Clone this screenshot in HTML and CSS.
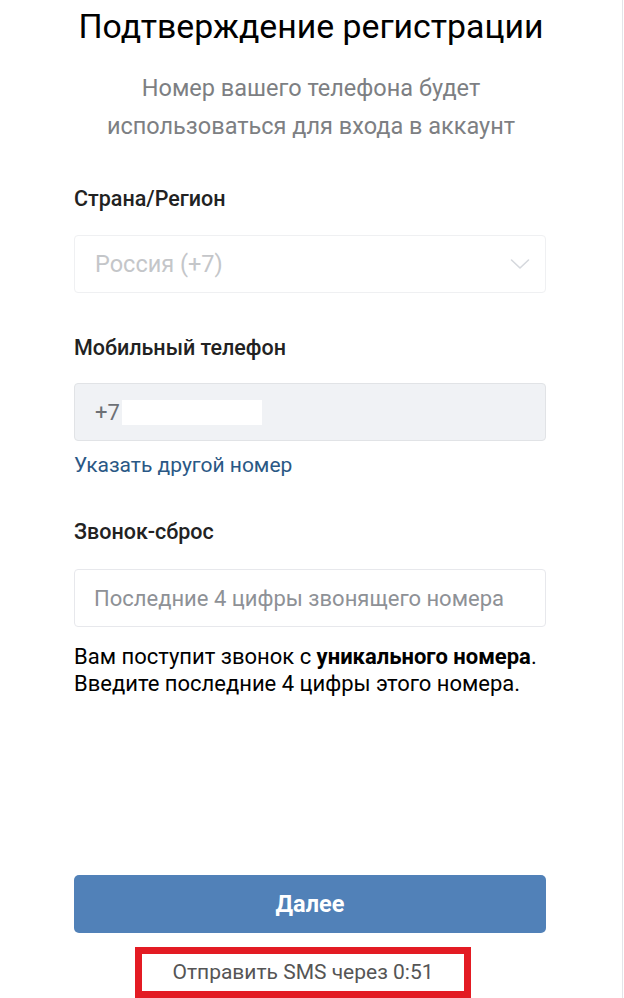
FILE: index.html
```html
<!DOCTYPE html>
<html lang="ru">
<head>
    <meta charset="UTF-8">
    <meta name="viewport" content="width=device-width, initial-scale=1.0">
    <title>Подтверждение регистрации</title>
    <link rel="stylesheet" href="styles.css">
</head>
<body>

<div class="page">
    <h1 class="title">Подтверждение регистрации</h1>
    <p class="subtitle">Номер вашего телефона будет<br>использоваться для входа в аккаунт</p>

    <form class="form" id="regForm">
        <label class="field-label">Страна/Регион</label>
        <div class="select disabled">
            <span>Россия (+7)</span>
            <svg class="chevron" width="20" height="12" viewBox="0 0 20 12">
                <path d="M1.5 2l8.5 8 8.5-8" fill="none" stroke="#d5d8dd" stroke-width="1.6" stroke-linecap="round" stroke-linejoin="round"/>
            </svg>
        </div>

        <label class="field-label">Мобильный телефон</label>
        <div class="phone">
            <span>+7</span>
            <span class="phone-mask"></span>
        </div>
        <a href="#" class="link">Указать другой номер</a>

        <label class="field-label" for="code">Звонок-сброс</label>
        <input type="text" id="code" class="input" placeholder="Последние 4 цифры звонящего номера">

        <p class="hint">Вам поступит звонок с <b>уникального номера</b>.<br>Введите последние 4 цифры этого номера.</p>

        <div class="spacer"></div>

        <button type="button" class="btn">Далее</button>
        <div class="sms">
            <span class="sms-box">Отправить SMS через <span id="timer">0:51</span></span>
        </div>
    </form>
</div>

</body>
</html>
```

FILE: styles.css
```css
body {
    margin: 0;
    font-family: Roboto, "Liberation Sans", Arial, sans-serif;
    background-color: #fff;
    color: #000;
}

.page {
    width: 622px;
    height: 998px;
    border-right: 1px solid #e3e4e8;
    display: flex;
    flex-direction: column;
    overflow: hidden;
}

.title {
    margin: 8px 0 0;
    font-size: 33.8px;
    font-weight: 400;
    line-height: 38px;
    text-align: center;
    color: #000;
}

.subtitle {
    margin: 23px 0 0;
    font-size: 23.5px;
    line-height: 38px;
    text-align: center;
    color: #7d7f83;
}

.form {
    display: flex;
    flex-direction: column;
    flex: 1;
    padding: 0 76px 0 74px;
}

.field-label {
    margin: 43px 0 0;
    font-size: 21.5px;
    font-weight: 500;
    line-height: 24px;
    color: #222;
}

.field-label:first-child {
    margin-top: 42px;
}

.select, .phone, .input {
    box-sizing: border-box;
    height: 58px;
    margin-top: 25px;
    padding: 0 20px 0 19px;
    border: 1px solid #e7e8ec;
    border-radius: 4px;
    font-family: inherit;
    display: flex;
    align-items: center;
}

.select {
    margin-top: 24px;
    padding: 0 15px 0 20px;
    justify-content: space-between;
    font-size: 23.5px;
    color: #c4c6c9;
    background-color: #fff;
    border-color: #eff0f2;
}

.phone {
    margin-top: 23px;
    padding-left: 20px;
    font-size: 22px;
    background-color: #f0f2f5;
    border-color: #e1e3e6;
    color: #6d7075;
}

.phone-mask {
    width: 140px;
    height: 25px;
    margin-left: 2px;
    background-color: #fff;
}

.input {
    width: 100%;
    font-size: 22px;
    color: #000;
    outline: none;
}

.input::placeholder {
    color: #8e9196;
}

.link {
    margin-top: 12px;
    font-size: 21px;
    line-height: 24px;
    color: #2a5885;
    text-decoration: none;
}

.hint {
    margin: 16px 0 0;
    font-size: 22px;
    line-height: 27px;
    color: #000;
}

.hint b {
    font-weight: 700;
}

.spacer {
    flex: 1;
}

.btn {
    height: 58px;
    border: none;
    border-radius: 5px;
    background-color: #5181b8;
    color: #fff;
    font-family: inherit;
    font-size: 23.5px;
    font-weight: 700;
    cursor: pointer;
}

.sms {
    display: flex;
    margin: 14px 0 0 61px;
}

.sms-box {
    box-sizing: border-box;
    width: 336px;
    height: 51px;
    border: 7px solid #e31b23;
    padding-top: 6px;
    text-align: center;
    font-size: 21px;
    line-height: 24px;
    color: #555;
}
```
